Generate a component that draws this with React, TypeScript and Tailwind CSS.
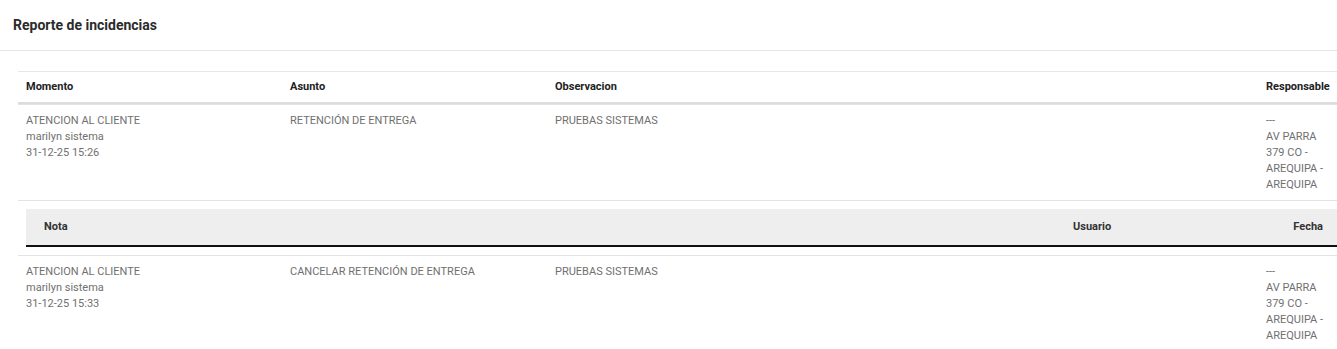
type Incidencia = {
  area: string;
  usuario: string;
  momento: string;
  asunto: string;
  observacion: string;
  responsable: string[];
};

const incidencias: Incidencia[] = [
  {
    area: 'ATENCION AL CLIENTE',
    usuario: 'marilyn sistema',
    momento: '31-12-25 15:26',
    asunto: 'RETENCIÓN DE ENTREGA',
    observacion: 'PRUEBAS SISTEMAS',
    responsable: ['---', 'AV PARRA 379 CO - AREQUIPA - AREQUIPA'],
  },
  {
    area: 'ATENCION AL CLIENTE',
    usuario: 'marilyn sistema',
    momento: '31-12-25 15:33',
    asunto: 'CANCELAR RETENCIÓN DE ENTREGA',
    observacion: 'PRUEBAS SISTEMAS',
    responsable: ['---', 'AV PARRA 379 CO - AREQUIPA - AREQUIPA'],
  },
];

const cols = 'grid grid-cols-[264px_265px_1fr_79px]';

function IncidenciaRow({ item }: { item: Incidencia }) {
  return (
    <div className={`${cols} border-t border-[#e3e3e3] text-[11px] leading-4 text-[#707070]`}>
      <div className="px-2 pt-2 pb-[7px]">
        <div>{item.area}</div>
        <div>{item.usuario}</div>
        <div>{item.momento}</div>
      </div>
      <div className="px-2 pt-2 pb-[7px]">{item.asunto}</div>
      <div className="px-2 pt-2 pb-[7px]">{item.observacion}</div>
      <div className="px-2 pt-2 pb-[7px]">
        {item.responsable.map((r, i) => (
          <div key={i}>{r}</div>
        ))}
      </div>
    </div>
  );
}

function NotasHeader() {
  return (
    <div className="border-t border-[#e3e3e3] py-2 pl-2">
      <div className="flex h-[38px] items-center bg-[#eeeeee] border-b-2 border-[#111] pl-[18px] pr-[14px] text-[11px] font-bold text-[#333]">
        <div className="flex-1">Nota</div>
        <div className="w-[150px]">Usuario</div>
        <div className="w-[100px] text-right">Fecha</div>
      </div>
    </div>
  );
}

export default function App() {
  return (
    <div className="min-h-screen bg-white font-['Roboto',_'Liberation_Sans',_sans-serif]">
      <div className="h-[51px] flex items-center px-[13px] border-b border-[#e5e5e5]">
        <h1 className="text-[14px] font-bold text-[#2b2b2b]">Reporte de incidencias</h1>
      </div>

      <div className="ml-[18px] mt-5">
        <div className={`${cols} h-[33px] items-center border-t border-[#e6e6ee] border-b-2 border-b-[#dcdcdc] text-[11px] font-bold text-[#222]`}>
          <div className="px-2 pt-px">Momento</div>
          <div className="px-2 pt-px">Asunto</div>
          <div className="px-2 pt-px">Observacion</div>
          <div className="px-2 pt-px">Responsable</div>
        </div>

        {incidencias.map((item, i) => (
          <div key={i}>
            {i > 0 && <NotasHeader />}
            <IncidenciaRow item={item} />
          </div>
        ))}
      </div>
    </div>
  );
}
